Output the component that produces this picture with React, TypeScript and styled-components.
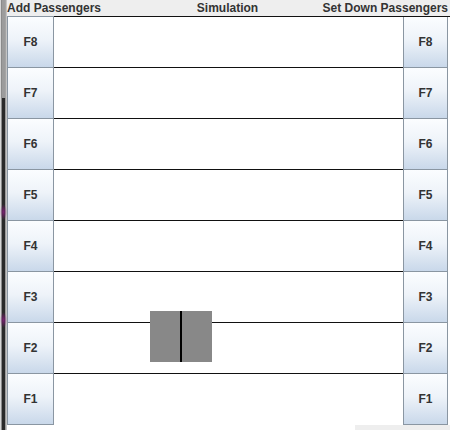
import * as React from 'react';
import styled, { createGlobalStyle } from 'styled-components';

const GlobalStyle = createGlobalStyle`
  html, body {
    margin: 0;
    padding: 0;
    background: #ffffff;
  }
`;

const FLOORS = ['F8', 'F7', 'F6', 'F5', 'F4', 'F3', 'F2', 'F1'];
const FLOOR_HEIGHT = 51;

const Frame = styled.div`
  width: 450px;
  height: 430px;
  display: flex;
  overflow: hidden;
  font-family: 'Liberation Sans', Arial, sans-serif;
`;

const WindowEdge = styled.div`
  width: 7px;
  flex: none;
  background: linear-gradient(
    to right,
    #d6d6d6 0 1px,
    #8a8a8a 1px 2px,
    #2a2a2a 2px 5px,
    #9a9a9a 5px 6px,
    #c4c4c4 6px 7px
  );
  display: flex;
  flex-direction: column;
`;

const EdgeTop = styled.div`
  height: 98px;
  background: linear-gradient(
    to right,
    #d6d6d6 0 1px,
    #8a8a8a 1px 2px,
    #9c9c9c 2px 5px,
    #a4a4a4 5px 6px,
    #c4c4c4 6px 7px
  );
`;

const EdgeGlow = styled.div<{ $top: number }>`
  margin-top: ${(p) => p.$top}px;
  height: 16px;
  background: radial-gradient(ellipse at 50% 50%, rgba(140, 30, 130, 0.8), rgba(40, 10, 40, 0) 70%);
`;

const Main = styled.div`
  flex: 1;
  display: flex;
  flex-direction: column;
`;

const Header = styled.div`
  height: 16px;
  background: #eeeeee;
  display: grid;
  grid-template-columns: 1fr auto 1fr;
  align-items: center;
  font-size: 12px;
  font-weight: bold;
  color: #333333;
  line-height: 16px;
  padding-right: 2px;
`;

const HeaderLabel = styled.span<{ $align: 'left' | 'center' | 'right' }>`
  text-align: ${(p) => p.$align};
  white-space: nowrap;
`;

const Body = styled.div`
  display: flex;
`;

const ButtonColumn = styled.div<{ $width: number; $topLine?: boolean }>`
  width: ${(p) => p.$width}px;
  flex: none;
  display: flex;
  flex-direction: column;
  border-top: 1px solid ${(p) => (p.$topLine ? '#111111' : '#8a96a2')};
`;

const FloorButton = styled.button`
  height: ${FLOOR_HEIGHT}px;
  margin: 0;
  padding: 0;
  border: 1px solid #8a96a2;
  border-top: none;
  border-radius: 0;
  background: linear-gradient(to bottom, #fbfdff 0%, #eef3f9 45%, #c9d8ea 100%);
  font-family: 'Liberation Sans', Arial, sans-serif;
  font-size: 12px;
  font-weight: bold;
  color: #333333;
  box-sizing: border-box;
`;

const Shaft = styled.div`
  position: relative;
  width: 349px;
  flex: none;
  display: flex;
  flex-direction: column;
`;

const FloorLane = styled.div`
  height: ${FLOOR_HEIGHT}px;
  box-sizing: border-box;
  border-top: 1px solid #111111;
  background: #ffffff;
`;

const Car = styled.div`
  position: absolute;
  left: 96px;
  top: 295px;
  width: 62px;
  height: 51px;
  background: #888888;
  display: flex;
  justify-content: center;
`;

const CarDoorGap = styled.div`
  width: 2px;
  background: #000000;
`;

const RightGap = styled.div`
  width: 2px;
  flex: none;
  border-top: 1px solid #111111;
`;

const Footer = styled.div`
  height: 6px;
  display: flex;
  justify-content: flex-end;
`;

const FooterShade = styled.div`
  width: 95px;
  background: #eeeeee;
`;

export default function App() {
  return (
    <>
      <GlobalStyle />
      <Frame>
        <WindowEdge>
          <EdgeTop />
          <EdgeGlow $top={106} />
          <EdgeGlow $top={92} />
        </WindowEdge>
        <Main>
          <Header>
            <HeaderLabel $align="left">Add Passengers</HeaderLabel>
            <HeaderLabel $align="center">Simulation</HeaderLabel>
            <HeaderLabel $align="right">Set Down Passengers</HeaderLabel>
          </Header>
          <Body>
            <ButtonColumn $width={47}>
              {FLOORS.map((f) => (
                <FloorButton key={f}>{f}</FloorButton>
              ))}
            </ButtonColumn>
            <Shaft>
              {FLOORS.map((f) => (
                <FloorLane key={f} />
              ))}
              <Car>
                <CarDoorGap />
              </Car>
            </Shaft>
            <ButtonColumn $width={45} $topLine>
              {FLOORS.map((f) => (
                <FloorButton key={f}>{f}</FloorButton>
              ))}
            </ButtonColumn>
            <RightGap />
          </Body>
          <Footer>
            <FooterShade />
          </Footer>
        </Main>
      </Frame>
    </>
  );
}
